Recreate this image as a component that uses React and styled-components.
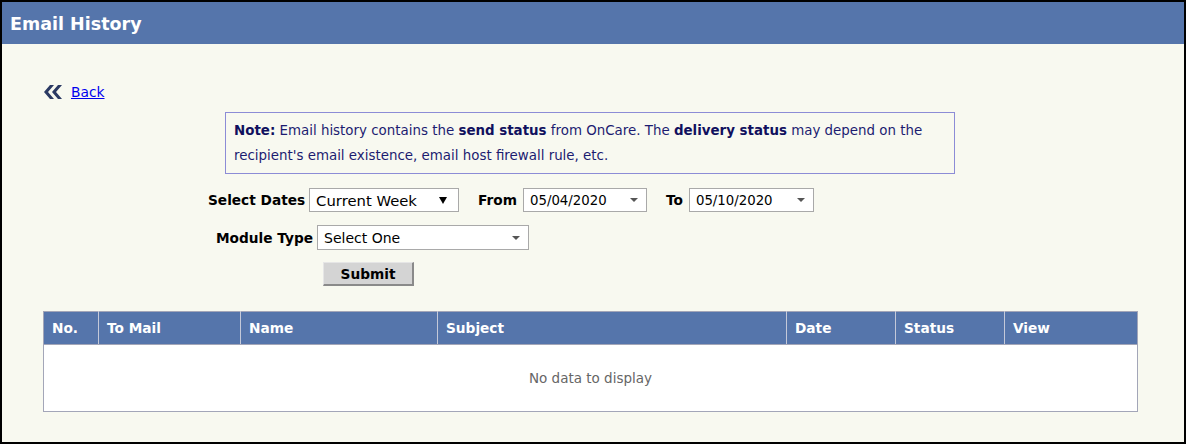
import styled, { createGlobalStyle } from 'styled-components'

const GlobalStyle = createGlobalStyle`
    html, body {
        margin: 0;
        padding: 0;
        background: #ffffff;
    }
    * {
        box-sizing: border-box;
    }
`

const columns = [
    { label: 'No.', width: 55 },
    { label: 'To Mail', width: 142 },
    { label: 'Name', width: 197 },
    { label: 'Subject', width: 349 },
    { label: 'Date', width: 109 },
    { label: 'Status', width: 109 },
    { label: 'View', width: 133 },
]

const BackIcon = () => (
    <svg width="21" height="14" viewBox="0 0 21 14">
        <polygon points="7,0 11,0 5,7 11,14 7,14 1,7" fill="#2b3a63" />
        <polygon points="15,0 19,0 13,7 19,14 15,14 9,7" fill="#2b3a63" />
    </svg>
)

const Field = ({ width, height, size, children, dark }) => (
    <FieldBox $width={width} $height={height} $size={size} $dark={dark}>
        <span>{children}</span>
        <Arrow $dark={dark} />
    </FieldBox>
)

const App = () => {
    return (
        <>
            <GlobalStyle />
            <Frame>
                <Header>Email History</Header>
                <Content>
                    <BackRow>
                        <BackIcon />
                        <BackLink href="#">Back</BackLink>
                    </BackRow>
                    <Note>
                        <b>Note:</b> Email history contains the <b>send status</b> from OnCare. The <b>delivery status</b> may depend on the recipient's email existence, email host firewall rule, etc.
                    </Note>
                    <FormRow $indent={165}>
                        <Label>Select Dates</Label>
                        <Field width={150} size={14.8} dark>Current Week</Field>
                        <Label $gapLeft={19}>From</Label>
                        <DateField>
                            <Field width={124} size={13.3}>05/04/2020</Field>
                        </DateField>
                        <Label $gapLeft={19}>To</Label>
                        <DateField>
                            <Field width={125} size={13.3}>05/10/2020</Field>
                        </DateField>
                    </FormRow>
                    <FormRow $indent={173} $top={13}>
                        <Label>Module Type</Label>
                        <Field width={212} height={25} size={14}>Select One</Field>
                    </FormRow>
                    <ButtonRow>
                        <SubmitButton>Submit</SubmitButton>
                    </ButtonRow>
                    <Table>
                        <colgroup>
                            {columns.map(c => (<col key={c.label} style={{ width: c.width }} />))}
                        </colgroup>
                        <thead>
                            <tr>
                                {columns.map(c => (<HeadCell key={c.label}>{c.label}</HeadCell>))}
                            </tr>
                        </thead>
                        <tbody>
                            <tr>
                                <EmptyCell colSpan={columns.length}>No data to display</EmptyCell>
                            </tr>
                        </tbody>
                    </Table>
                </Content>
            </Frame>
        </>
    )
}

export default App

const Frame = styled.div`
    width: 1186px;
    height: 444px;
    border: 2px solid #000;
    background: #f8f9f0;
    font-family: "DejaVu Sans", Verdana, sans-serif;
    display: flex;
    flex-direction: column;
`
const Header = styled.div`
    height: 42px;
    background: #5575ab;
    color: #fff;
    font-size: 17.5px;
    font-weight: bold;
    display: flex;
    align-items: center;
    padding-left: 8px;
    padding-top: 1px;
`
const Content = styled.div`
    padding: 39px 47px 0 41px;
    display: flex;
    flex-direction: column;
`
const BackRow = styled.div`
    display: flex;
    align-items: center;
    gap: 7px;
    height: 18px;
`
const BackLink = styled.a`
    color: #0000ee;
    font-size: 13.8px;
    text-decoration: underline;
`
const Note = styled.div`
    align-self: center;
    width: 730px;
    margin-top: 11px;
    border: 1px solid #8c8cd6;
    padding: 5px 8px;
    color: #1c1c70;
    font-size: 13.4px;
    line-height: 25px;
    b {
        color: #10105e;
    }
`
const FormRow = styled.div`
    display: flex;
    align-items: center;
    margin-top: ${p => p.$top ?? 14}px;
    padding-left: ${p => p.$indent}px;
`
const Label = styled.span`
    font-size: 13.7px;
    font-weight: bold;
    color: #000;
    margin-left: ${p => p.$gapLeft ?? 0}px;
    margin-right: 4px;
`
const DateField = styled.div`
    margin-left: 2px;
`
const FieldBox = styled.div`
    width: ${p => p.$width}px;
    height: ${p => p.$height ?? 24}px;
    background: #fff;
    border: 1px solid #a9a9a9;
    display: flex;
    align-items: center;
    justify-content: space-between;
    padding: 0 ${p => p.$dark ? 11 : 8}px 0 6px;
    font-size: ${p => p.$size}px;
    color: #000;
`
const Arrow = styled.span`
    width: 0;
    height: 0;
    border-left: 4px solid transparent;
    border-right: 4px solid transparent;
    border-top: ${p => p.$dark ? 7 : 4}px solid ${p => p.$dark ? '#000' : '#555'};
`
const ButtonRow = styled.div`
    display: flex;
    margin-top: 12px;
    padding-left: 280px;
`
const SubmitButton = styled.button`
    width: 91px;
    height: 24px;
    background: #d4d4d4;
    border: none;
    border-right: 2px solid #8a8a8a;
    border-bottom: 2px solid #8a8a8a;
    border-top: 1px solid #e6e6e6;
    border-left: 1px solid #e6e6e6;
    font-family: "DejaVu Sans", Verdana, sans-serif;
    font-size: 13.7px;
    font-weight: bold;
    color: #000;
    padding: 0;
`
const Table = styled.table`
    margin-top: 25px;
    width: 1094px;
    border-collapse: collapse;
    table-layout: fixed;
    border: 1px solid #a3a6b8;
    background: #fff;
`
const HeadCell = styled.th`
    height: 33px;
    background: #5575ab;
    color: #fff;
    font-size: 13.7px;
    font-weight: bold;
    text-align: left;
    padding: 0 8px;
    border-left: 1px solid #c4c9d9;
    border-bottom: 1px solid #a3a6b8;
    &:first-child {
        border-left: none;
    }
`
const EmptyCell = styled.td`
    height: 67px;
    text-align: center;
    color: #666;
    font-size: 13.5px;
`
